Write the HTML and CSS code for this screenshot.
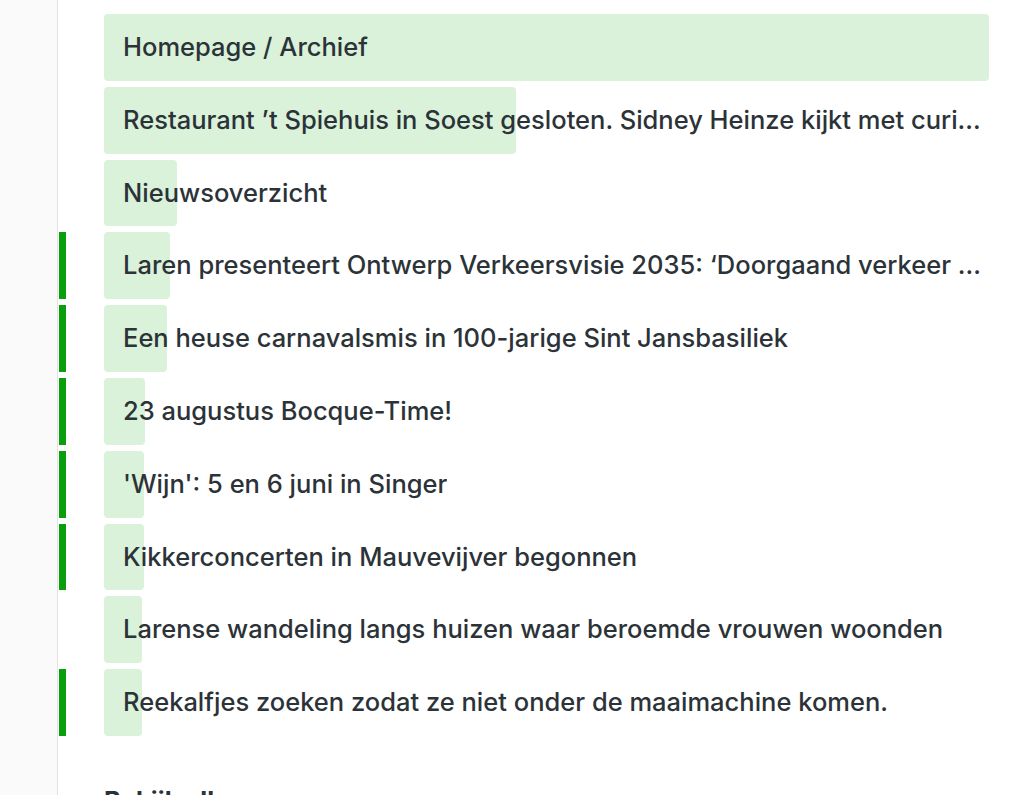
FILE: index.html
```html
<!DOCTYPE html>
<html lang="nl">
<head>
<meta charset="utf-8">
<title>Pagina's</title>
<link rel="stylesheet" href="styles.css">
</head>
<body>
<div class="page">
  <aside class="sidebar"></aside>
  <main class="main">
    <ul class="list">
      <li class="row"><span class="marker off"></span><a class="track"><span class="fill" style="width:100%"></span><span class="label">Homepage / Archief</span></a></li>
      <li class="row"><span class="marker off"></span><a class="track"><span class="fill" style="width:412px"></span><span class="label">Restaurant ’t Spiehuis in Soest gesloten. Sidney Heinze kijkt met curiositeit naar de toekomst</span></a></li>
      <li class="row"><span class="marker off"></span><a class="track"><span class="fill" style="width:73px"></span><span class="label">Nieuwsoverzicht</span></a></li>
      <li class="row"><span class="marker"></span><a class="track"><span class="fill" style="width:66px"></span><span class="label">Laren presenteert Ontwerp Verkeersvisie 2035: ‘Doorgaand verkeer moet zoveel mogelijk om het dorp heen’</span></a></li>
      <li class="row"><span class="marker"></span><a class="track"><span class="fill" style="width:63px"></span><span class="label">Een heuse carnavalsmis in 100-jarige Sint Jansbasiliek</span></a></li>
      <li class="row"><span class="marker"></span><a class="track"><span class="fill" style="width:41px"></span><span class="label">23 augustus Bocque-Time!</span></a></li>
      <li class="row"><span class="marker"></span><a class="track"><span class="fill" style="width:40px"></span><span class="label">'Wijn': 5 en 6 juni in Singer</span></a></li>
      <li class="row"><span class="marker"></span><a class="track"><span class="fill" style="width:40px"></span><span class="label">Kikkerconcerten in Mauvevijver begonnen</span></a></li>
      <li class="row"><span class="marker off"></span><a class="track"><span class="fill" style="width:38px"></span><span class="label">Larense wandeling langs huizen waar beroemde vrouwen woonden</span></a></li>
      <li class="row"><span class="marker"></span><a class="track"><span class="fill" style="width:38px"></span><span class="label">Reekalfjes zoeken zodat ze niet onder de maaimachine komen.</span></a></li>
    </ul>
    <h3 class="more">Bekijk alle</h3>
  </main>
</div>
</body>
</html>
```

FILE: styles.css
```css
* { box-sizing: border-box; }
html, body { margin: 0; padding: 0; background: #ffffff; }
body {
  font-family: Inter, "Noto Sans", "Liberation Sans", sans-serif;
  color: #2c3338;
  overflow: hidden;
}
.page {
  display: flex;
  min-height: 795px;
}
.sidebar {
  width: 58px;
  flex: 0 0 58px;
  background: #fafafa;
  border-right: 1px solid #e2e2e2;
}
.main {
  flex: 1;
  min-width: 0;
  padding: 14px 35px 0 1px;
}
.list {
  list-style: none;
  margin: 0;
  padding: 0;
  display: flex;
  flex-direction: column;
  gap: 6px;
}
.row {
  display: flex;
  height: 66.8px;
}
.marker {
  width: 7px;
  flex: 0 0 7px;
  background: #089e0c;
}
.marker.off { background: transparent; }
.track {
  position: relative;
  flex: 1;
  min-width: 0;
  margin-left: 38px;
  display: flex;
  align-items: center;
  padding: 0 6px 0 19px;
  text-decoration: none;
  color: inherit;
}
.fill {
  position: absolute;
  left: 0;
  top: 0;
  bottom: 0;
  background: #daf2da;
  border-radius: 4px;
}
.label {
  position: relative;
  font-size: 25.5px;
  font-weight: 500;
  letter-spacing: 0;
  white-space: nowrap;
  overflow: hidden;
  text-overflow: ellipsis;
  line-height: 1.2;
}
.more {
  margin: 50px 0 0 45px;
  font-size: 25.5px;
  font-weight: 700;
  line-height: 1.2;
}
```
